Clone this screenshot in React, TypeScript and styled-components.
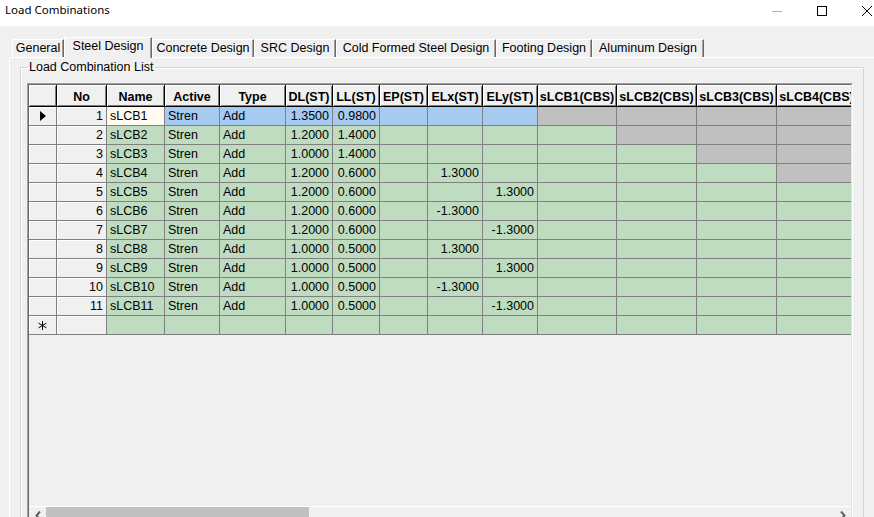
import styled, { createGlobalStyle } from "styled-components";

const GlobalStyle = createGlobalStyle`
  html, body {
    margin: 0;
    padding: 0;
    background: #f0f0f0;
  }
  body {
    font-family: "Liberation Sans", Arial, sans-serif;
    color: #000;
  }
  * {
    box-sizing: border-box;
  }
`;

// column widths, row header first
const COLS = [28, 50, 58, 55, 66, 47, 47, 48, 55, 55, 79, 80, 80, 80];
const gridTemplate = COLS.map((w) => `${w}px`).join(" ");

const HEADERS = [
  "",
  "No",
  "Name",
  "Active",
  "Type",
  "DL(ST)",
  "LL(ST)",
  "EP(ST)",
  "ELx(ST)",
  "ELy(ST)",
  "sLCB1(CBS)",
  "sLCB2(CBS)",
  "sLCB3(CBS)",
  "sLCB4(CBS)",
];

const TABS = [
  { label: "General", width: 52 },
  { label: "Steel Design", width: 88, active: true },
  { label: "Concrete Design", width: 102 },
  { label: "SRC Design", width: 82 },
  { label: "Cold Formed Steel Design", width: 160 },
  { label: "Footing Design", width: 96 },
  { label: "Aluminum Design", width: 112 },
];

type Tone = "green" | "blue" | "gray" | "cream";

const TONES: Record<Tone, string> = {
  green: "#c0dcc0",
  blue: "#a6caf0",
  gray: "#c0c0c0",
  cream: "#fffbf0",
};

interface Combo {
  name: string;
  dl: string;
  ll: string;
  elx?: string;
  ely?: string;
}

const combos: Combo[] = [
  { name: "sLCB1", dl: "1.3500", ll: "0.9800" },
  { name: "sLCB2", dl: "1.2000", ll: "1.4000" },
  { name: "sLCB3", dl: "1.0000", ll: "1.4000" },
  { name: "sLCB4", dl: "1.2000", ll: "0.6000", elx: "1.3000" },
  { name: "sLCB5", dl: "1.2000", ll: "0.6000", ely: "1.3000" },
  { name: "sLCB6", dl: "1.2000", ll: "0.6000", elx: "-1.3000" },
  { name: "sLCB7", dl: "1.2000", ll: "0.6000", ely: "-1.3000" },
  { name: "sLCB8", dl: "1.0000", ll: "0.5000", elx: "1.3000" },
  { name: "sLCB9", dl: "1.0000", ll: "0.5000", ely: "1.3000" },
  { name: "sLCB10", dl: "1.0000", ll: "0.5000", elx: "-1.3000" },
  { name: "sLCB11", dl: "1.0000", ll: "0.5000", ely: "-1.3000" },
];

const Win = {
  Main: styled.div`
    width: 874px;
    height: 517px;
    overflow: hidden;
    display: flex;
    flex-direction: column;
    background: #f0f0f0;
  `,
  TitleBar: styled.div`
    height: 26px;
    flex: none;
    background: #fff;
    display: flex;
    justify-content: space-between;
    overflow: hidden;
  `,
  Title: styled.div`
    padding: 3px 0 0 5px;
    font-family: "Noto Sans", "Liberation Sans", sans-serif;
    font-size: 11.5px;
    line-height: 14px;
    color: #000;
  `,
  Controls: styled.div`
    display: flex;
    margin-right: -15px;
  `,
  ControlButton: styled.div`
    width: 45px;
    height: 22px;
    display: flex;
    align-items: center;
    justify-content: center;
  `,
  Body: styled.div`
    flex: 1;
    min-height: 0;
    display: flex;
    flex-direction: column;
    padding-top: 11px;
  `,
};

const Tabs = {
  Strip: styled.div`
    height: 20px;
    flex: none;
    display: flex;
    align-items: flex-end;
    padding-left: 12px;
    position: relative;
    z-index: 1;
  `,
  Tab: styled.div<{ $width: number; $active?: boolean }>`
    width: ${(p) => p.$width}px;
    height: ${(p) => (p.$active ? 21 : 18)}px;
    margin-bottom: ${(p) => (p.$active ? -1 : 0)}px;
    padding-top: 2px;
    background: #f0f0f0;
    border-top: 1px solid #fff;
    border-left: 1px solid #fff;
    border-right: 1px solid #696969;
    box-shadow: inset -1px 0 0 #a0a0a0;
    font-size: 12.5px;
    line-height: 13px;
    text-align: center;
    white-space: nowrap;
  `,
  Panel: styled.div`
    flex: 1;
    min-height: 0;
    margin-left: 9px;
    border-top: 1px solid #fff;
    border-left: 1px solid #fff;
    padding: 0 10px 0 10px;
  `,
};

const Group = {
  Box: styled.fieldset`
    margin: 2px 0 0 0;
    padding: 9px 10px 0 6px;
    border: 1px solid #d5d5d5;
    box-shadow: inset 1px 1px 0 #fff;
    min-width: 0;
  `,
  Legend: styled.legend`
    padding: 0 2px;
    font-size: 12.5px;
    line-height: 14px;
    color: #000;
  `,
};

const Grid = {
  Frame: styled.div`
    width: 826px;
    height: 443px;
    border-style: solid;
    border-width: 1px;
    border-color: #a0a0a0 #fff #fff #a0a0a0;
  `,
  Inner: styled.div`
    height: 100%;
    display: flex;
    flex-direction: column;
    overflow: hidden;
    border-style: solid;
    border-width: 1px;
    border-color: #696969 #e3e3e3 #e3e3e3 #696969;
    background: #f0f0f0;
  `,
  Row: styled.div<{ $head?: boolean }>`
    display: grid;
    grid-template-columns: ${gridTemplate};
    width: 828px;
    height: ${(p) => (p.$head ? 22 : 19)}px;
    flex: none;
  `,
  HeadCell: styled.div`
    background: #f0f0f0;
    border-right: 1px solid #000;
    border-bottom: 1px solid #000;
    box-shadow: inset 1px 1px 0 #fff, inset -1px -1px 0 #808080;
    padding-top: 5px;
    font-size: 12.5px;
    font-weight: bold;
    line-height: 14px;
    text-align: center;
    white-space: nowrap;
    overflow: hidden;
  `,
  Indicator: styled.div`
    background: #f0f0f0;
    border-right: 1px solid #808080;
    border-bottom: 1px solid #808080;
    box-shadow: inset 1px 1px 0 #fff;
    display: flex;
    align-items: center;
    justify-content: center;
  `,
  NoCell: styled.div`
    background: #f0f0f0;
    border-right: 1px solid #808080;
    border-bottom: 1px solid #808080;
    box-shadow: inset 1px 1px 0 #fff;
    padding: 2px 3px 0 0;
    font-size: 12.5px;
    line-height: 14px;
    text-align: right;
  `,
  Cell: styled.div<{ $tone: Tone; $right?: boolean }>`
    background: ${(p) => TONES[p.$tone]};
    border-right: 1px solid #808080;
    border-bottom: 1px solid #808080;
    padding: 2px 3px 0 3px;
    font-size: 12.5px;
    line-height: 14px;
    text-align: ${(p) => (p.$right ? "right" : "left")};
    white-space: nowrap;
    overflow: hidden;
  `,
  Filler: styled.div`
    flex: 1;
  `,
};

const Scroll = {
  Bar: styled.div`
    height: 18px;
    flex: none;
    display: flex;
    border-top: 1px solid #fff;
    background: #f0f0f0;
  `,
  Arrow: styled.div`
    width: 17px;
    flex: none;
    display: flex;
    align-items: center;
    justify-content: center;
  `,
  Thumb: styled.div`
    width: 263px;
    background: #c0c0c0;
  `,
  Track: styled.div`
    flex: 1;
  `,
};

const CurrentMark = () => (
  <svg width="6" height="10" viewBox="0 0 6 10">
    <polygon points="0,0 6,5 0,10" fill="#000" />
  </svg>
);

const NewMark = () => (
  <svg width="9" height="9" viewBox="0 0 9 9">
    <g stroke="#000" strokeWidth="1">
      <line x1="4.5" y1="0" x2="4.5" y2="9" />
      <line x1="0.6" y1="2.2" x2="8.4" y2="6.8" />
      <line x1="0.6" y1="6.8" x2="8.4" y2="2.2" />
    </g>
  </svg>
);

const Chevron = ({ dir }: { dir: "left" | "right" }) => (
  <svg width="6" height="9" viewBox="0 0 6 9">
    <polyline
      points={dir === "left" ? "5,0.5 1.5,4.5 5,8.5" : "1,0.5 4.5,4.5 1,8.5"}
      fill="none"
      stroke="#606060"
      strokeWidth="2"
    />
  </svg>
);

const CBS_COUNT = 4;

const App = () => {
  return (
    <Win.Main>
      <GlobalStyle />
      <Win.TitleBar>
        <Win.Title>Load Combinations</Win.Title>
        <Win.Controls>
          <Win.ControlButton>
            <svg width="10" height="10" viewBox="0 0 10 10">
              <line x1="0" y1="5.5" x2="10" y2="5.5" stroke="#b0b0b0" />
            </svg>
          </Win.ControlButton>
          <Win.ControlButton>
            <svg width="10" height="10" viewBox="0 0 10 10">
              <rect x="0.5" y="0.5" width="9" height="9" fill="none" stroke="#000" />
            </svg>
          </Win.ControlButton>
          <Win.ControlButton>
            <svg width="10" height="10" viewBox="0 0 10 10">
              <path d="M0 0 L10 10 M10 0 L0 10" stroke="#000" strokeWidth="1" />
            </svg>
          </Win.ControlButton>
        </Win.Controls>
      </Win.TitleBar>

      <Win.Body>
        <Tabs.Strip>
          {TABS.map((t) => (
            <Tabs.Tab key={t.label} $width={t.width} $active={t.active}>
              {t.label}
            </Tabs.Tab>
          ))}
        </Tabs.Strip>
        <Tabs.Panel>
          <Group.Box>
            <Group.Legend>Load Combination List</Group.Legend>
            <Grid.Frame>
              <Grid.Inner>
                <Grid.Row $head>
                  {HEADERS.map((h, i) => (
                    <Grid.HeadCell key={i}>{h}</Grid.HeadCell>
                  ))}
                </Grid.Row>

                {combos.map((c, i) => {
                  const current = i === 0;
                  const tone: Tone = current ? "blue" : "green";
                  return (
                    <Grid.Row key={c.name}>
                      <Grid.Indicator>{current && <CurrentMark />}</Grid.Indicator>
                      <Grid.NoCell>{i + 1}</Grid.NoCell>
                      <Grid.Cell $tone={current ? "cream" : "green"}>{c.name}</Grid.Cell>
                      <Grid.Cell $tone={tone}>Stren</Grid.Cell>
                      <Grid.Cell $tone={tone}>Add</Grid.Cell>
                      <Grid.Cell $tone={tone} $right>
                        {c.dl}
                      </Grid.Cell>
                      <Grid.Cell $tone={tone} $right>
                        {c.ll}
                      </Grid.Cell>
                      <Grid.Cell $tone={tone} $right />
                      <Grid.Cell $tone={tone} $right>
                        {c.elx}
                      </Grid.Cell>
                      <Grid.Cell $tone={tone} $right>
                        {c.ely}
                      </Grid.Cell>
                      {Array.from({ length: CBS_COUNT }, (_, k) => (
                        <Grid.Cell key={k} $tone={k >= i ? "gray" : tone} $right />
                      ))}
                    </Grid.Row>
                  );
                })}

                <Grid.Row>
                  <Grid.Indicator>
                    <NewMark />
                  </Grid.Indicator>
                  <Grid.NoCell />
                  {Array.from({ length: 12 }, (_, k) => (
                    <Grid.Cell key={k} $tone="green" />
                  ))}
                </Grid.Row>

                <Grid.Filler />

                <Scroll.Bar>
                  <Scroll.Arrow>
                    <Chevron dir="left" />
                  </Scroll.Arrow>
                  <Scroll.Thumb />
                  <Scroll.Track />
                  <Scroll.Arrow>
                    <Chevron dir="right" />
                  </Scroll.Arrow>
                </Scroll.Bar>
              </Grid.Inner>
            </Grid.Frame>
          </Group.Box>
        </Tabs.Panel>
      </Win.Body>
    </Win.Main>
  );
};

export default App;
